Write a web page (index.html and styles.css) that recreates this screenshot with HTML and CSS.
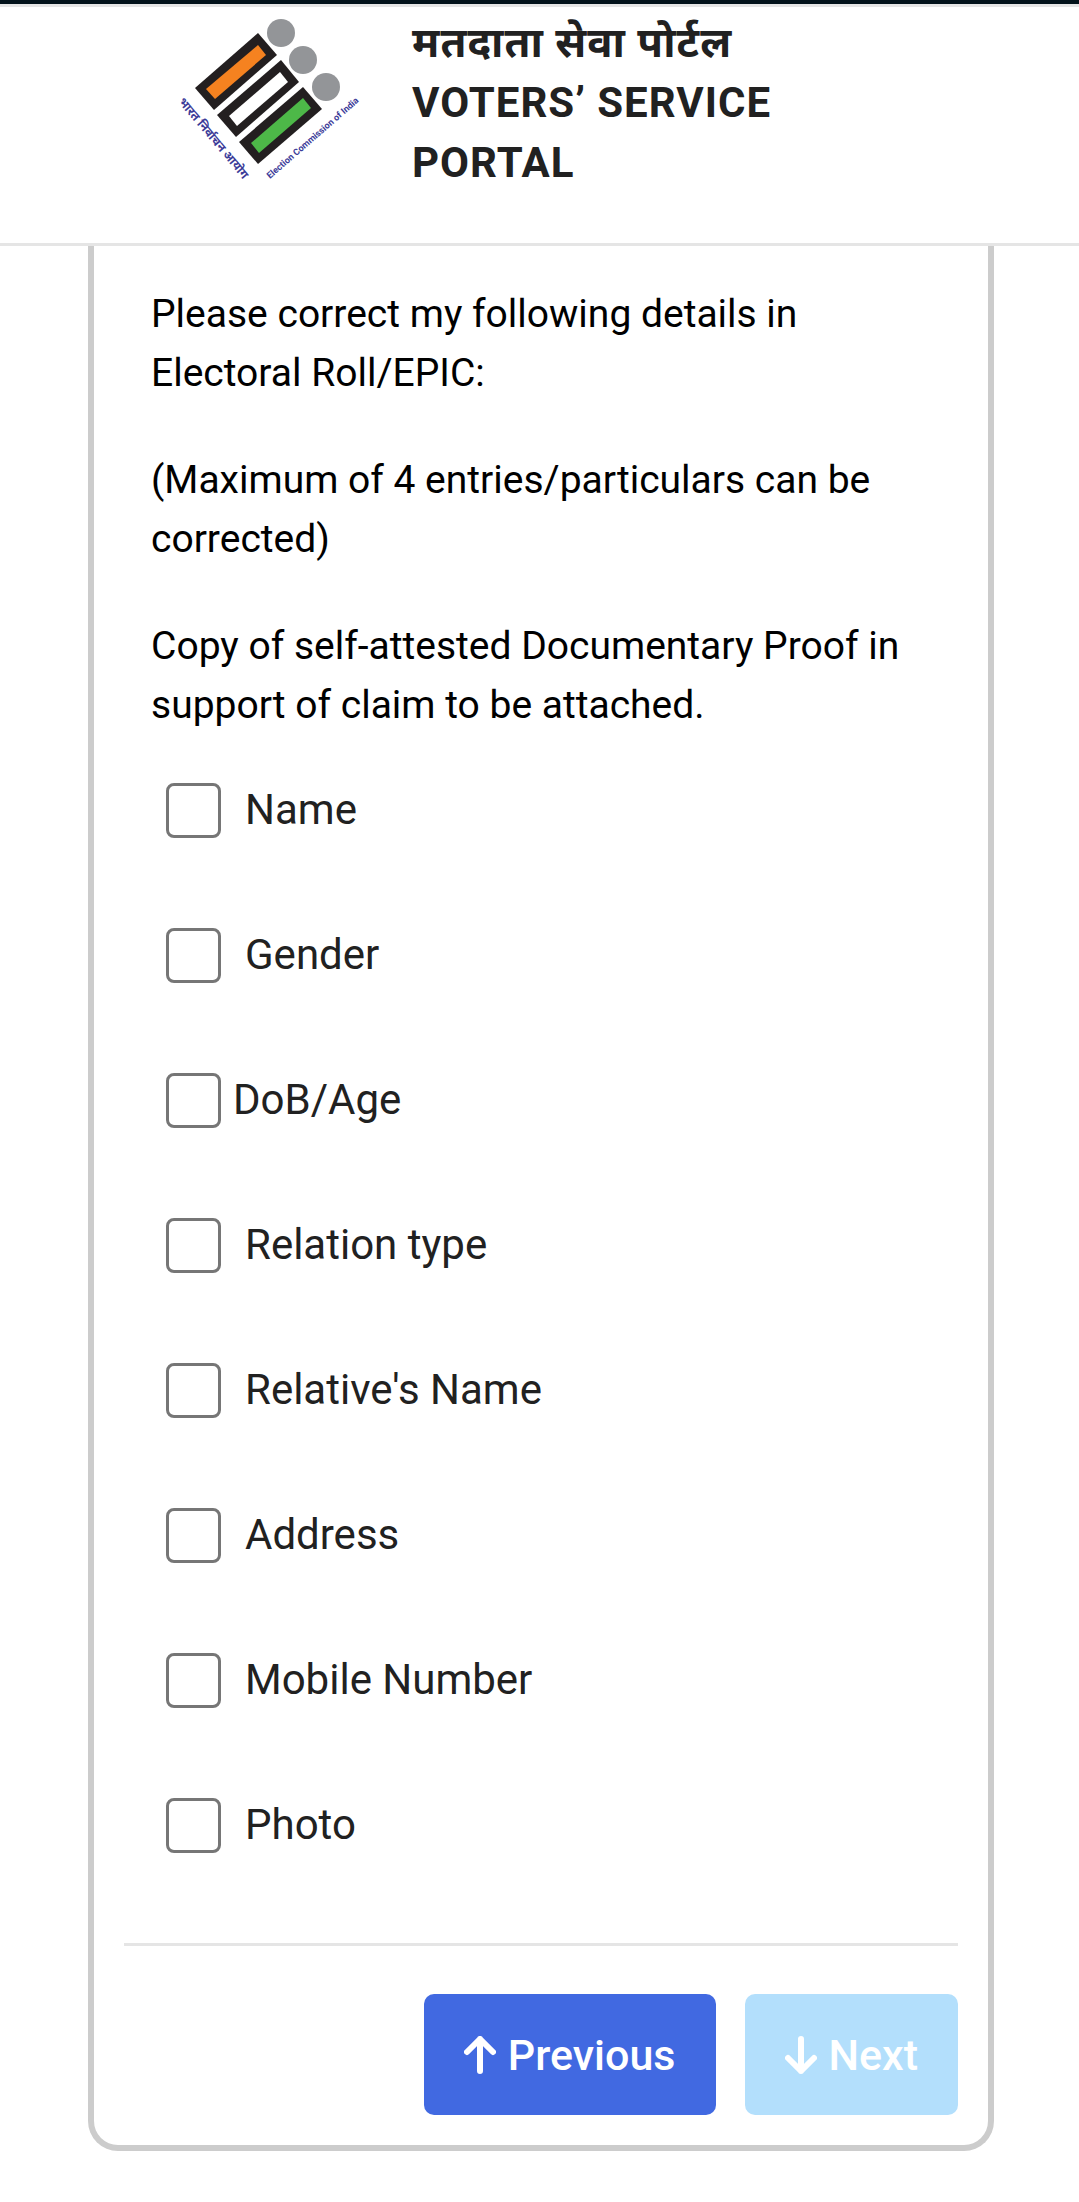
FILE: index.html
```html
<!DOCTYPE html>
<html lang="en">
<head>
    <meta charset="utf-8">
    <meta name="viewport" content="width=device-width, initial-scale=1">
    <title>Voters' Service Portal</title>
    <link rel="stylesheet" href="styles.css">
</head>
<body>
    <header class="header">
        <svg class="logo" viewBox="0 0 220 200" role="img" aria-label="Election Commission of India">
            <g fill="#231f20">
                <path d="M98 32 L117 54 L54 109 L35 87z"/>
                <path d="M121 59 L139 81 L76 136 L57 114z"/>
                <path d="M143 86 L162 108 L98 163 L79 141z"/>
            </g>
            <path fill="#f58220" d="M98 44 L106 54 L55 98 L46 88z"/>
            <path fill="#fff" d="M120 71 L128 81 L77 125 L69 115z"/>
            <path fill="#4db848" d="M143 97 L151 107 L99 152 L91 142z"/>
            <g fill="#939598">
                <circle cx="121" cy="32" r="14"/>
                <circle cx="143" cy="59" r="14"/>
                <circle cx="166" cy="86" r="14"/>
            </g>
            <g class="logo-text">
                <text class="logo-hindi" transform="translate(18 101) rotate(50)">भारत निर्वाचन आयोग</text>
                <text class="logo-english" transform="translate(110 178) rotate(-41)">Election Commission of India</text>
            </g>
        </svg>
        <h1>मतदाता सेवा पोर्टल<br>VOTERS’ SERVICE PORTAL</h1>
    </header>
    <main class="card">
        <form>
            <div class="intro">
                <p>Please correct my following details in Electoral Roll/EPIC:</p>
                <p>(Maximum of 4 entries/particulars can be corrected)</p>
                <p>Copy of self-attested Documentary Proof in support of claim to be attached.</p>
            </div>
            <div class="options">
                <div class="option">
                    <input type="checkbox" id="name">
                    <label for="name">Name</label>
                </div>
                <div class="option">
                    <input type="checkbox" id="gender">
                    <label for="gender">Gender</label>
                </div>
                <div class="option option-tight">
                    <input type="checkbox" id="dob">
                    <label for="dob">DoB/Age</label>
                </div>
                <div class="option">
                    <input type="checkbox" id="relationType">
                    <label for="relationType">Relation type</label>
                </div>
                <div class="option">
                    <input type="checkbox" id="relativeName">
                    <label for="relativeName">Relative's Name</label>
                </div>
                <div class="option">
                    <input type="checkbox" id="address">
                    <label for="address">Address</label>
                </div>
                <div class="option">
                    <input type="checkbox" id="mobile">
                    <label for="mobile">Mobile Number</label>
                </div>
                <div class="option">
                    <input type="checkbox" id="photo">
                    <label for="photo">Photo</label>
                </div>
            </div>
            <div class="actions">
                <button type="button" class="btn">
                    <svg viewBox="0 0 32 38" aria-hidden="true"><path d="M16 35V3M3 16L16 3L29 16"/></svg>
                    Previous
                </button>
                <button type="button" class="btn btn-next" disabled>
                    <svg viewBox="0 0 32 38" aria-hidden="true"><path d="M16 3V35M3 22L16 35L29 22"/></svg>
                    Next
                </button>
            </div>
        </form>
    </main>
</body>
</html>
```
FILE: styles.css
```css
* {
    box-sizing: border-box;
}
body {
    margin: 0;
    background: #fff;
    border-top: 4px solid #03131b;
    font-family: Roboto, "Noto Sans Devanagari", "Noto Sans", sans-serif;
    color: #212121;
}
.header {
    display: flex;
    align-items: flex-start;
    gap: 32px;
    height: 242px;
    padding-left: 160px;
    padding-right: 240px;
    border-top: 3px solid #e5e5e5;
    border-bottom: 3px solid #e5e5e5;
}
.logo {
    flex: none;
    width: 220px;
    height: 200px;
    margin-top: -6px;
}
.logo-text {
    fill: #3b3b98;
}
.logo-hindi {
    font-size: 12px;
    font-weight: bold;
}
.logo-english {
    font-size: 9px;
    font-weight: bold;
}
h1 {
    margin: 6px 0 0;
    font-size: 42px;
    line-height: 60px;
    font-weight: bold;
    letter-spacing: 1px;
}
.card {
    margin: 0 85px 0 88px;
    padding: 39px 30px 30px;
    border: 6px solid #ccc;
    border-top: none;
    border-radius: 0 0 30px 30px;
}
.intro {
    display: flex;
    flex-direction: column;
    gap: 48px;
    padding: 0 27px;
    font-size: 39px;
    line-height: 59px;
    color: #000;
}
.intro p {
    margin: 0;
}
.options {
    display: flex;
    flex-direction: column;
    gap: 85px;
    padding: 45px 42px 88px;
}
.option {
    display: flex;
    align-items: center;
    gap: 24px;
    font-size: 42px;
    line-height: 60px;
}
.option-tight {
    gap: 12px;
}
.option input {
    appearance: none;
    width: 55px;
    height: 55px;
    margin: 0;
    border: 3px solid #767676;
    border-radius: 8px;
    background: #fff;
}
.option input:checked {
    background: #4169e1;
}
.actions {
    display: flex;
    justify-content: flex-end;
    gap: 29px;
    padding-top: 48px;
    border-top: 3px solid #e5e5e5;
}
.btn {
    display: flex;
    align-items: center;
    gap: 12px;
    height: 121px;
    padding: 0 40px;
    border: none;
    border-radius: 10px;
    background: #4169e1;
    color: #fff;
    font-family: inherit;
    font-size: 43px;
    font-weight: 500;
    cursor: pointer;
}
.btn svg {
    width: 32px;
    height: 38px;
    fill: none;
    stroke: #fff;
    stroke-width: 6px;
    stroke-linecap: round;
    stroke-linejoin: round;
}
.btn-next {
    background: #b3dffc;
    cursor: default;
}
```
